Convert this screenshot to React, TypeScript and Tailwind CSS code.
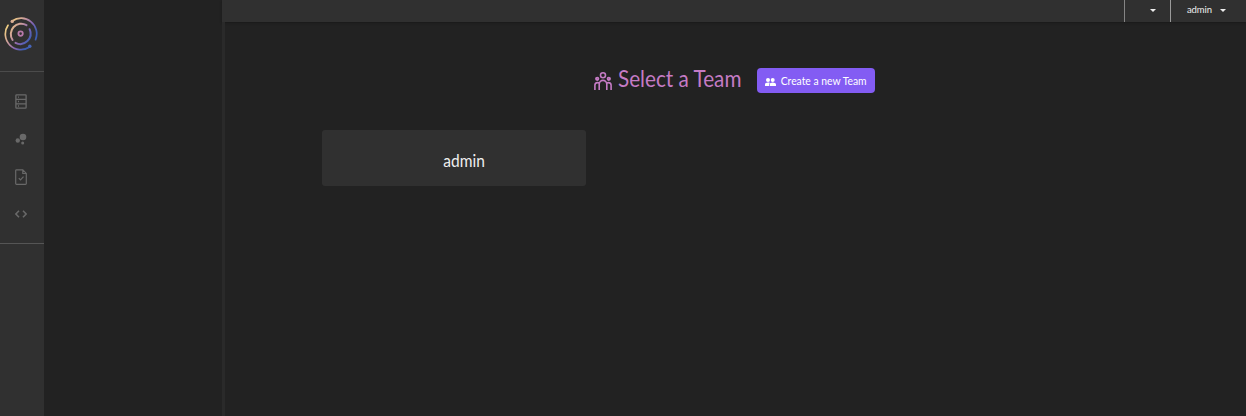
import React from 'react';

function Logo() {
  return (
    <svg className="h-[34px] w-[34px]" viewBox="0 0 34 34" fill="none" strokeLinecap="round">
      <defs>
        <linearGradient id="ring" gradientUnits="userSpaceOnUse" x1="4" y1="8" x2="30" y2="26">
          <stop offset="0" stopColor="#f0cf82" />
          <stop offset="0.32" stopColor="#cb9b9c" />
          <stop offset="0.58" stopColor="#8866b2" />
          <stop offset="0.85" stopColor="#3d5db2" />
        </linearGradient>
      </defs>
      <g stroke="url(#ring)" strokeWidth="1.7">
        <path d="M8.2 4A15.6 15.6 0 0 1 31.6 22.6" />
        <path d="M25.6 30A15.6 15.6 0 0 1 4 8.3" />
        <path d="M22.5 8.2A10.4 10.4 0 0 0 8.6 23" strokeWidth="2" />
        <path d="M25.6 12.2A10.4 10.4 0 0 1 11.5 25.9" strokeWidth="2" />
      </g>
      <circle cx="8.2" cy="4.4" r="1.7" fill="#d9ae93" />
      <circle cx="25.8" cy="29.2" r="1.7" fill="#4664b8" />
      <circle cx="16.6" cy="16.6" r="2.2" stroke="#b779a8" strokeWidth="1.8" />
    </svg>
  );
}

function RackIcon() {
  return (
    <svg className="h-[15px] w-3" viewBox="0 0 12 15" fill="none" stroke="#696969" strokeWidth="1.3">
      <rect x=".9" y=".9" width="10.2" height="13.2" rx=".6" />
      <path d="M1 5.3h10M1 9.8h10M3 3.1h1M3 7.5h1M3 12h1" />
    </svg>
  );
}

function BubblesIcon() {
  return (
    <svg className="h-3 w-3" viewBox="0 0 12 12" fill="#696969">
      <circle cx="8" cy="4" r="3.3" />
      <circle cx="2.8" cy="7.5" r="2.2" />
      <circle cx="7.7" cy="10" r="1.5" />
    </svg>
  );
}

function FileIcon() {
  return (
    <svg className="h-4 w-3" viewBox="0 0 12 16" fill="none" stroke="#696969" strokeWidth="1.2">
      <path d="M1.6.8h6.2l3.5 3.6v10.1a.8.8 0 0 1-.8.8H1.5a.8.8 0 0 1-.8-.8V1.6a.8.8 0 0 1 .9-.8ZM7.8 1v3.5h3.4M3.8 9.2l1.7 1.7 3-3.2" />
    </svg>
  );
}

function CodeIcon() {
  return (
    <svg className="h-2 w-3" viewBox="0 0 12 8" fill="none" stroke="#696969" strokeWidth="1.5">
      <path d="M4 .7.9 4 4 7.3M8 .7 11.1 4 8 7.3" />
    </svg>
  );
}

function TeamIcon() {
  return (
    <svg className="h-[18px] w-[18px]" viewBox="0 0 18 18" fill="none" stroke="#c57bc5" strokeWidth="1.6">
      <circle cx="9" cy="3.3" r="2.5" />
      <circle cx="3.2" cy="6.8" r="1.2" strokeWidth="1.9" />
      <circle cx="14.8" cy="6.8" r="1.2" strokeWidth="1.9" />
      <path d="M5.2 18v-5.8a3.8 3.8 0 0 1 7.6 0V18M.9 18v-4.7c0-1.5 1-2.7 2.6-2.7.8 0 1.4.2 1.8.8M17.1 18v-4.7c0-1.5-1-2.7-2.6-2.7-.8 0-1.4.2-1.8.8" />
    </svg>
  );
}

function PeopleIcon() {
  return (
    <svg className="mt-0.5 h-2 w-[11px]" viewBox="0 0 11 8" fill="#fff">
      <circle cx="3" cy="2.1" r="2" />
      <circle cx="7.7" cy="2.1" r="2" />
      <path d="M0 8V6.4c0-1.2 1.4-1.9 3-1.9.8 0 1.4.1 1.9.4-.6.4-.9.9-.9 1.6V8ZM4.7 8V6.4c0-1.2 1.4-1.9 3-1.9s3.3.7 3.3 1.9V8Z" />
    </svg>
  );
}

function Caret() {
  return (
    <svg className="h-[3px] w-1.5" viewBox="0 0 6 3" fill="#eee">
      <path d="M0 0h6L3 3Z" />
    </svg>
  );
}

export default function App() {
  return (
    <div className="flex h-[416px] w-full overflow-hidden bg-[#222] font-['Lato',sans-serif] text-[#eee]">
      <nav className="flex w-11 shrink-0 flex-col bg-[#303030]">
        <div className="flex h-[72px] border-b border-[#4b4b4b] pl-1 pt-[17px]">
          <Logo />
        </div>
        <div className="flex h-[172px] flex-col border-b border-[#555] pb-[10px] pl-[15px] pt-[10px]">
          <div className="flex h-[38px] items-center"><RackIcon /></div>
          <div className="flex h-[38px] items-center"><BubblesIcon /></div>
          <div className="flex h-[37px] items-center"><FileIcon /></div>
          <div className="flex h-[38px] items-center"><CodeIcon /></div>
        </div>
      </nav>
      <aside className="w-[178px] shrink-0" />
      <div className="flex min-w-0 grow flex-col">
        <header className="flex h-[22px] shrink-0 justify-end bg-[#303030] shadow-[0_1px_2px_#191919]">
          <div className="flex w-[46px] items-center border-l border-[#858585] pb-[2px] pl-[25px]">
            <Caret />
          </div>
          <div className="flex w-[76px] items-center border-l border-[#9a9a9a] pb-[2px] pl-[16px] text-[9.5px] leading-3 tracking-[-0.1px]">
            <span className="w-[33px]">admin</span>
            <Caret />
          </div>
        </header>
        <main className="grow border-l-[3px] border-[#2a2a2a]">
          <div className="flex h-[71px] items-start pl-[369px] pt-[46px]">
            <div className="flex w-[163px] shrink-0 items-start">
              <div className="w-6 shrink-0 pt-1"><TeamIcon /></div>
              <h1 className="origin-left scale-x-[0.92] whitespace-nowrap text-[22.5px] leading-[22px] text-[#c57bc5]">Select a Team</h1>
            </div>
            <button className="flex h-[25px] w-[118px] shrink-0 items-center rounded-[4px] bg-[#835cf3] pl-2 text-[11px] leading-3 text-white">
              <PeopleIcon />
              <span className="origin-left scale-x-[0.94] whitespace-nowrap pl-[5px]">Create a new Team</span>
            </button>
          </div>
          <div className="ml-[97px] mt-[37px] flex h-[56px] w-[264px] items-center justify-center rounded-[3px] bg-[#303030] pl-[20px] pt-[6px] text-[16.5px] leading-5">
            <span className="scale-x-[0.94]">admin</span>
          </div>
        </main>
      </div>
    </div>
  );
}
